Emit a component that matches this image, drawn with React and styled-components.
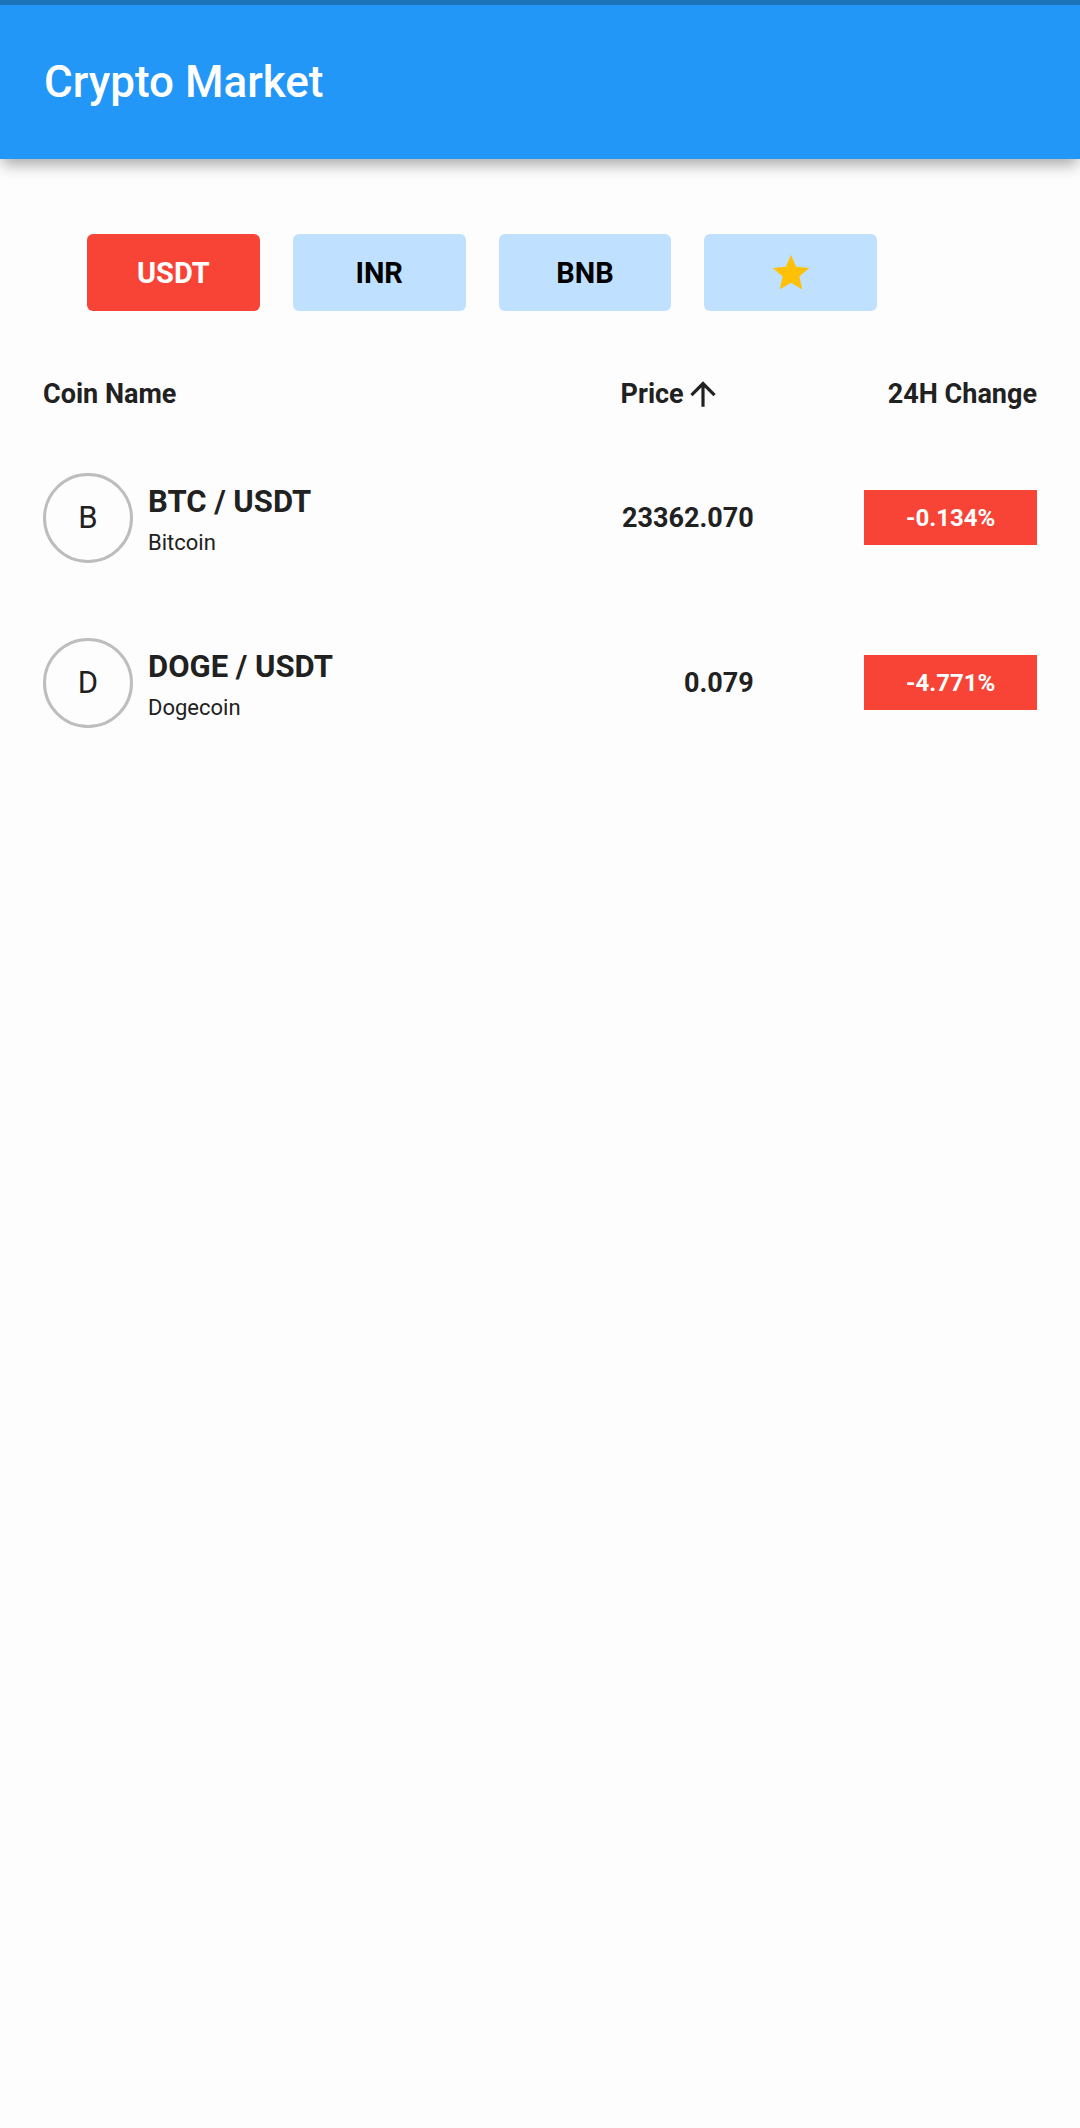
import React, { useState } from 'react';
import styled, { createGlobalStyle } from 'styled-components';
import { MdArrowUpward, MdStar } from 'react-icons/md';

const GlobalStyle = createGlobalStyle`
  * { box-sizing: border-box; }
  body {
    margin: 0;
    background: #fdfdfd;
    color: #212121;
    font-family: Roboto, 'Liberation Sans', sans-serif;
  }
  button { font-family: inherit; cursor: pointer; }
`;

const AppBar = styled.header`
  display: flex;
  align-items: center;
  height: 159px;
  padding: 0 44px;
  border-top: 5px solid #1a72b8;
  background: #2297f7;
  box-shadow: 0 8px 14px -2px rgba(0, 0, 0, 0.32);
`;

const Title = styled.h1`
  margin: 0;
  color: #fff;
  font-size: 44px;
  font-weight: 500;
  line-height: 52px;
`;

const Content = styled.main`
  padding: 75px 43px 43px;
`;

const Tabs = styled.nav`
  display: flex;
  gap: 33px;
  padding: 0 44px;
`;

const Tab = styled.button`
  display: flex;
  align-items: center;
  justify-content: center;
  width: 16vw;
  height: 77px;
  padding: 0;
  border: 0;
  border-radius: 6px;
  background: ${(p) => (p.$active ? '#f84437' : '#bfe1ff')};
  color: ${(p) => (p.$active ? '#fff' : '#000')};
  font-size: 29px;
  font-weight: 700;
`;

const StarIcon = styled(MdStar)`
  width: 44px;
  height: 44px;
  color: #ffc107;
`;

const Market = styled.table`
  width: 100%;
  margin-top: 40px;
  border-collapse: collapse;
  table-layout: fixed;
`;

const HeadCell = styled.th`
  width: ${(p) => p.$width};
  height: 84px;
  padding: 2px 0 0;
  font-size: 27px;
  font-weight: 700;
  line-height: 32px;
  text-align: ${(p) => p.$align || 'left'};
`;

const SortButton = styled.button`
  display: inline-flex;
  align-items: center;
  margin-right: 32px;
  padding: 0;
  border: 0;
  background: none;
  color: inherit;
  font-size: inherit;
  font-weight: inherit;
  line-height: inherit;
  vertical-align: middle;
`;

const SortIcon = styled(MdArrowUpward)`
  width: 38px;
  height: 38px;
`;

const Cell = styled.td`
  height: 165px;
  padding: 0;
`;

const PriceCell = styled(Cell)`
  font-size: 27px;
  font-weight: 700;
  text-align: right;
`;

const Coin = styled.div`
  display: flex;
  align-items: center;
  gap: 15px;
`;

const Avatar = styled.span`
  display: flex;
  align-items: center;
  justify-content: center;
  width: 90px;
  height: 90px;
  border: 3px solid #bdbdbd;
  border-radius: 50%;
  font-size: 31px;
`;

const Names = styled.div`
  display: flex;
  flex-direction: column;
  gap: 9px;
  padding-top: 5px;
`;

const Pair = styled.span`
  font-size: 31px;
  font-weight: 700;
  line-height: 36px;
`;

const FullName = styled.span`
  font-size: 22px;
  line-height: 28px;
`;

const Change = styled.div`
  display: flex;
  align-items: center;
  justify-content: center;
  width: 16vw;
  height: 55px;
  margin-left: auto;
  background: #f84437;
  color: #fff;
  font-size: 24px;
  font-weight: 700;
`;

const tabs = ['USDT', 'INR', 'BNB', 'Favourites'];

const coins = [
  { symbol: 'BTC', name: 'Bitcoin', price: '23362.070', change: '-0.134%' },
  { symbol: 'DOGE', name: 'Dogecoin', price: '0.079', change: '-4.771%' },
];

export default function App() {
  const [active, setActive] = useState('USDT');

  return (
    <>
      <GlobalStyle />
      <AppBar>
        <Title>Crypto Market</Title>
      </AppBar>
      <Content>
        <Tabs>
          {tabs.map((tab) => (
            <Tab
              key={tab}
              type="button"
              aria-label={tab}
              aria-pressed={tab === active}
              $active={tab === active}
              onClick={() => setActive(tab)}
            >
              {tab === 'Favourites' ? <StarIcon /> : tab}
            </Tab>
          ))}
        </Tabs>
        <Market>
          <thead>
            <tr>
              <HeadCell scope="col" $width="44%">Coin Name</HeadCell>
              <HeadCell scope="col" $width="27.5%" $align="right">
                <SortButton type="button">
                  Price
                  <SortIcon />
                </SortButton>
              </HeadCell>
              <HeadCell scope="col" $width="28.5%" $align="right">24H Change</HeadCell>
            </tr>
          </thead>
          <tbody>
            {coins.map((coin) => (
              <tr key={coin.symbol}>
                <Cell>
                  <Coin>
                    <Avatar>{coin.symbol[0]}</Avatar>
                    <Names>
                      <Pair>{coin.symbol} / USDT</Pair>
                      <FullName>{coin.name}</FullName>
                    </Names>
                  </Coin>
                </Cell>
                <PriceCell>{coin.price}</PriceCell>
                <Cell>
                  <Change>{coin.change}</Change>
                </Cell>
              </tr>
            ))}
          </tbody>
        </Market>
      </Content>
    </>
  );
}
